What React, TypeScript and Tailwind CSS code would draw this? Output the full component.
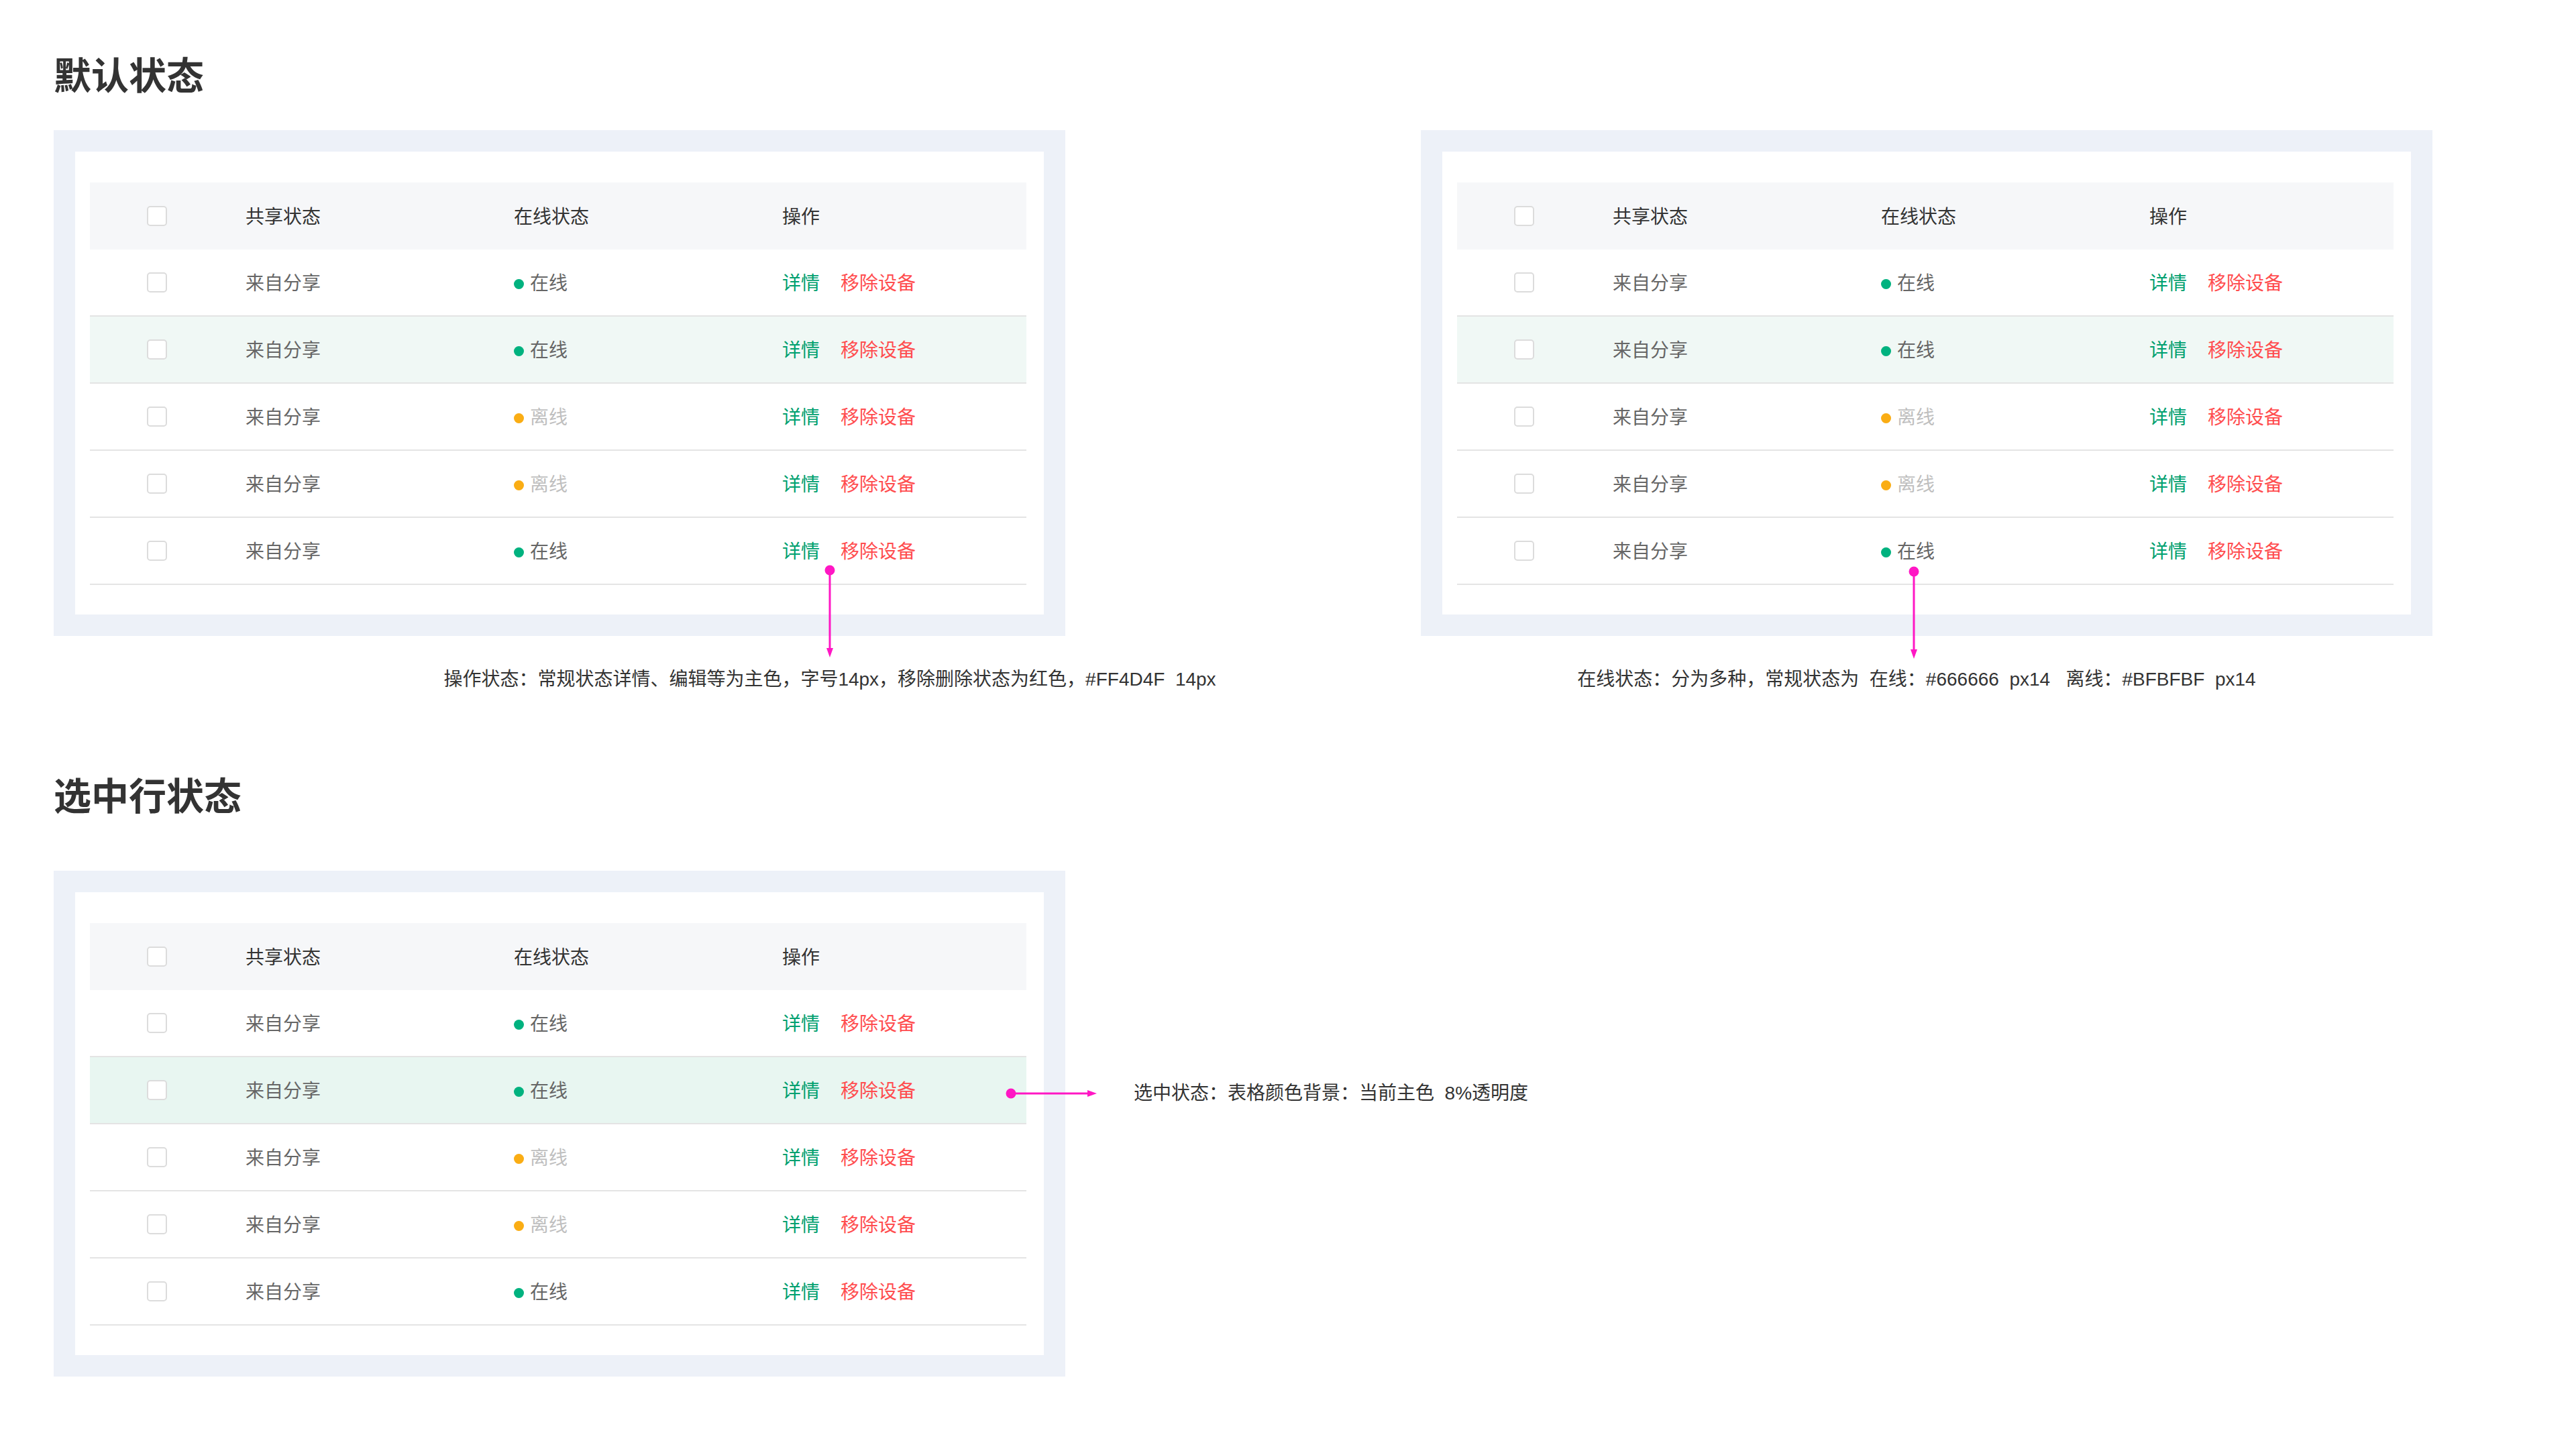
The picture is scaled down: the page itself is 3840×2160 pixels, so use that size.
const rows = [
  { online: true, active: false },
  { online: true, active: true },
  { online: false, active: false },
  { online: false, active: false },
  { online: true, active: false },
];

function Checkbox() {
  return (
    <span className="block w-[30px] h-[30px] rounded-[5px] border-2 border-[#dcdcdc] bg-white" />
  );
}

function Status({ online }: { online: boolean }) {
  return (
    <div className="flex items-center gap-[9px]">
      <span
        className={
          online
            ? "w-[15px] h-[15px] rounded-full bg-[#00b27f]"
            : "w-[15px] h-[15px] rounded-full bg-[#faad14]"
        }
      />
      <span className={online ? "text-[#666666]" : "text-[#bfbfbf]"}>
        {online ? "在线" : "离线"}
      </span>
    </div>
  );
}

function DeviceTable({ activeBg }: { activeBg: string }) {
  return (
    <div className="w-[1508px] h-[754px] bg-[#edf1f8] p-8">
      <div className="h-full bg-white pt-[46px] pl-[22px] pr-[26px]">
        <div className="grid grid-cols-[232px_400px_400px_1fr] items-center h-[100px] pt-[4px] bg-[#f6f7f9] text-[#333333]">
          <div className="pl-[85px] -mt-[4px]">
            <Checkbox />
          </div>
          <div>共享状态</div>
          <div>在线状态</div>
          <div>操作</div>
        </div>
        {rows.map((row, i) => (
          <div
            key={i}
            className={`grid grid-cols-[232px_400px_400px_1fr] items-center h-[100px] pt-[4px] border-b-2 border-[#e4e4e4] ${
              row.active ? activeBg : "bg-white"
            }`}
          >
            <div className="pl-[85px] -mt-[4px]">
              <Checkbox />
            </div>
            <div className="text-[#666666]">来自分享</div>
            <Status online={row.online} />
            <div className="flex gap-[31px]">
              <span className="text-[#00a06f]">详情</span>
              <span className="text-[#ff4d4f]">移除设备</span>
            </div>
          </div>
        ))}
      </div>
    </div>
  );
}

function ArrowDown({ className }: { className: string }) {
  return (
    <svg className={className} width="16" height="138" viewBox="0 0 16 138">
      <circle cx="8" cy="8" r="7.5" fill="#ff17c4" />
      <line x1="8" y1="8" x2="8" y2="126" stroke="#ff17c4" strokeWidth="3" />
      <polygon points="3,124 13,124 8,138" fill="#ff17c4" />
    </svg>
  );
}

function ArrowRight({ className }: { className: string }) {
  return (
    <svg className={className} width="136" height="16" viewBox="0 0 136 16">
      <circle cx="8" cy="8" r="7.5" fill="#ff17c4" />
      <line x1="8" y1="8" x2="124" y2="8" stroke="#ff17c4" strokeWidth="3" />
      <polygon points="122,3 122,13 136,8" fill="#ff17c4" />
    </svg>
  );
}

export default function App() {
  return (
    <div className="w-[3840px] h-[2160px] bg-white pt-[86px] pl-20 font-['Liberation_Sans','Noto_Sans_CJK_SC',sans-serif] text-[28px]">
      <h1 className="text-[56px] leading-[56px] font-bold text-[#333333]">默认状态</h1>

      <div className="flex gap-[530px] mt-[52px]">
        <div className="flex flex-col w-[1508px] shrink-0">
          <div className="relative">
            <DeviceTable activeBg="bg-[#f0f8f5]" />
            <ArrowDown className="absolute left-[1149px] top-[648px]" />
          </div>
          <div className="mt-[45px] ml-[457px] w-[1400px] shrink-0 text-center leading-[40px] text-[#333333] whitespace-pre">
            操作状态：常规状态详情、编辑等为主色，字号14px，移除删除状态为红色，#FF4D4F  14px
          </div>
        </div>

        <div className="flex flex-col w-[1508px] shrink-0">
          <div className="relative">
            <DeviceTable activeBg="bg-[#f0f8f5]" />
            <ArrowDown className="absolute left-[727px] top-[650px]" />
          </div>
          <div className="mt-[45px] ml-[39px] w-[1400px] shrink-0 text-center leading-[40px] text-[#333333] whitespace-pre">
            在线状态：分为多种，常规状态为  在线：#666666  px14   离线：#BFBFBF  px14
          </div>
        </div>
      </div>

      <h1 className="mt-[127px] text-[56px] leading-[56px] font-bold text-[#333333]">选中行状态</h1>

      <div className="flex items-start mt-[82px]">
        <div className="relative">
          <DeviceTable activeBg="bg-[#e8f6f1]" />
          <ArrowRight className="absolute left-[1419px] top-[324px]" />
        </div>
        <div className="ml-[102px] mt-[312px] leading-[40px] text-[#333333] whitespace-pre">
          选中状态：表格颜色背景：当前主色  8%透明度
        </div>
      </div>
    </div>
  );
}
